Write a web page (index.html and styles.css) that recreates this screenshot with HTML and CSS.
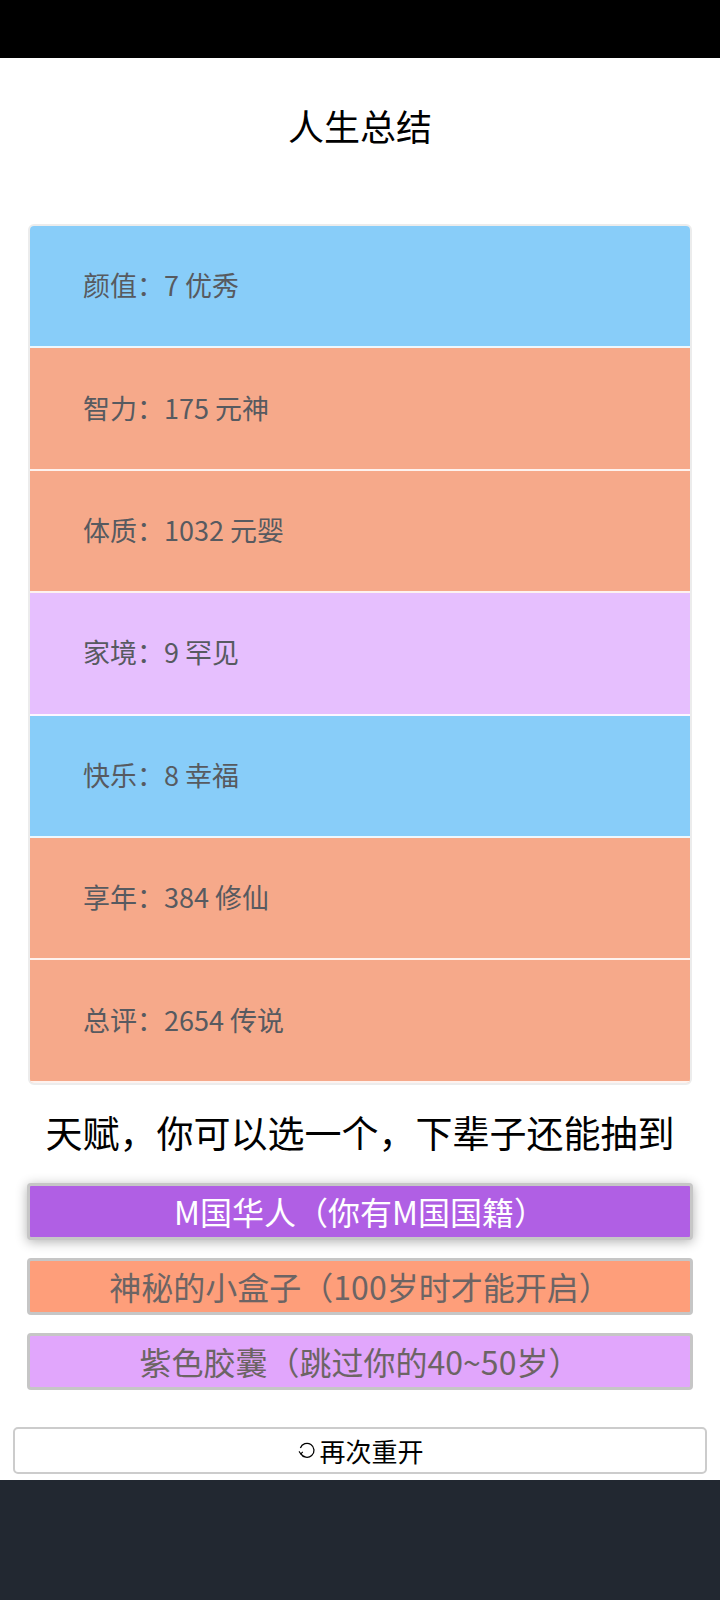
FILE: index.html
```html
<!DOCTYPE html>
<html lang="zh-CN">
<head>
  <meta charset="UTF-8" />
  <meta name="viewport" content="width=device-width, initial-scale=1.0"/>
  <title>人生总结</title>
  <link rel="stylesheet" href="styles.css">
</head>
<body>

  <div class="statusbar"></div>

  <div class="page">
    <h1 class="title">人生总结</h1>

    <ul class="summary">
      <li class="row grade-blue">颜值：7 优秀</li>
      <li class="row grade-orange">智力：175 元神</li>
      <li class="row grade-orange">体质：1032 元婴</li>
      <li class="row grade-purple">家境：9 罕见</li>
      <li class="row grade-blue">快乐：8 幸福</li>
      <li class="row grade-orange">享年：384 修仙</li>
      <li class="row grade-orange">总评：2654 传说</li>
    </ul>

    <h2 class="subtitle">天赋，你可以选一个，下辈子还能抽到</h2>

    <div class="talents">
      <button class="talent talent-legend selected">M国华人（你有M国国籍）</button>
      <button class="talent talent-rare">神秘的小盒子（100岁时才能开启）</button>
      <button class="talent talent-epic">紫色胶囊（跳过你的40~50岁）</button>
    </div>

    <button class="restart">
      <svg class="restart-icon" viewBox="0 0 22 22" width="22" height="22">
        <path d="M4.4 9 A7 7 0 1 1 4.8 14.6" fill="none" stroke="#000" stroke-width="1.3"/>
        <path d="M3 12.4 L4.8 14.8 L6.8 12.8" fill="none" stroke="#000" stroke-width="1.1"/>
      </svg>再次重开
    </button>
  </div>

  <div class="footer"></div>

</body>
</html>
```

FILE: styles.css
```css
body {
  margin: 0;
  font-family: "Noto Sans CJK SC", "Noto Sans", sans-serif;
  background: #fff;
}

.statusbar {
  height: 58px;
  background: #000;
}

.page {
  padding-top: 46px;
  padding-bottom: 6px;
}

.title {
  margin: 0;
  text-align: center;
  font-size: 36px;
  font-weight: normal;
  line-height: 43px;
  color: #000;
}

.summary {
  list-style: none;
  margin: 77px 28px 0;
  padding: 0;
  border: 2px solid #ececec;
  border-radius: 6px;
  overflow: hidden;
}

.row {
  box-sizing: border-box;
  height: 122.4px;
  display: flex;
  align-items: center;
  padding-left: 53px;
  padding-bottom: 3px;
  font-size: 27px;
  color: #575a60;
  border-bottom: 2px solid rgba(255, 255, 255, 0.85);
}

.grade-blue {
  background: #88cdf9;
}

.grade-orange {
  background: #f6a98a;
}

.grade-purple {
  background: #e6bffe;
}

.subtitle {
  margin: 25px 0 0;
  text-align: center;
  font-size: 37px;
  font-weight: normal;
  line-height: 44px;
  color: #000;
}

.talents {
  display: flex;
  flex-direction: column;
  gap: 18px;
  margin: 29px 27px 0;
}

.talent {
  height: 57px;
  border: 3px solid #c6c6c6;
  border-radius: 4px;
  font-family: inherit;
  font-size: 32px;
  color: #6c6464;
  padding: 0;
  cursor: pointer;
}

.talent-legend {
  background: #b05fe4;
  color: #fff;
}

.talent-rare {
  background: #fe9e7a;
}

.talent-epic {
  background: #e1a6fc;
}

.selected {
  box-shadow: 0 2px 12px rgba(0, 0, 0, 0.3);
}

.restart {
  display: flex;
  align-items: center;
  justify-content: center;
  box-sizing: border-box;
  width: 694px;
  height: 47px;
  margin: 37px 13px 0;
  background: #fff;
  border: 2px solid #cccccc;
  border-radius: 5px;
  font-family: inherit;
  font-size: 26px;
  color: #000;
  cursor: pointer;
}

.restart-icon {
  margin-right: 1px;
}

.footer {
  height: 121px;
  background: #222831;
}
```
